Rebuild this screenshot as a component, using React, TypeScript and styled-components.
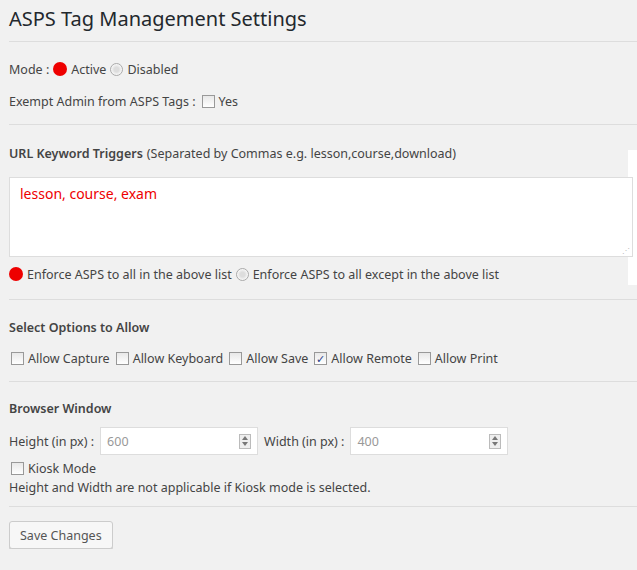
import React from 'react';
import styled, { createGlobalStyle } from 'styled-components';

const Global = createGlobalStyle`
  html, body { margin: 0; background: #f1f1f1; }
  body { font-family: "Noto Sans", "Open Sans", sans-serif; font-size: 12.5px; color: #444; }
`;

const Page = styled.div`
  padding: 0 0 0 9px;
  position: relative;
  width: 628px;
`;

const Title = styled.h1`
  margin: 0;
  padding: 5px 0 0;
  height: 36px;
  font-size: 20px;
  font-weight: 400;
  color: #23282d;
  border-bottom: 1px solid #ddd;
  margin-right: -9px;
`;

const Section = styled.div<{ $pad?: string }>`
  border-bottom: 1px solid #ddd;
  padding: ${p => p.$pad || '12px 0'};
`;

const Row = styled.div<{ $h?: number }>`
  display: flex;
  align-items: center;
  gap: 4px;
  height: ${p => p.$h || 26}px;
`;

const Heading = styled.div`
  font-weight: 600;
  height: 28px;
  display: flex;
  align-items: center;
  span { font-weight: 400; margin-left: 4px; }
`;

const RedDot = styled.span`
  width: 14px; height: 14px; border-radius: 50%;
  background: #e00; display: inline-block;
`;

const Radio = styled.span`
  width: 11px; height: 11px; border-radius: 50%;
  border: 1px solid #aaa; background: radial-gradient(circle, #ddd 30%, #f8f8f8 70%);
  display: inline-block;
`;

const Box = styled.span`
  width: 11px; height: 11px; border: 1px solid #999;
  background: linear-gradient(#e8e8e8, #fff);
  display: inline-flex; align-items: center; justify-content: center;
  color: #2a3e8c; font-size: 11px; line-height: 1;
  margin-left: 2px;
`;

const TextArea = styled.div`
  background: #fff;
  border: 1px solid #ddd;
  height: 66px;
  padding: 6px 10px;
  color: #e00;
  font-size: 14px;
  margin-right: 4px;
  position: relative;
`;

const Grip = styled.span`
  position: absolute; right: 2px; bottom: 1px; color: #bbb; font-size: 8px;
`;

const RightStrip = styled.div`
  position: absolute; right: 0; top: 150px; width: 9px; height: 135px; background: #fff;
`;

const NumInput = styled.div`
  width: 158px; height: 28px; background: #fff; border: 1px solid #ddd;
  display: flex; align-items: center; justify-content: space-between;
  padding: 0 6px; box-sizing: border-box; color: #999; margin: 0 2px;
`;

const Spinner = styled.span`
  width: 10px; height: 13px; border: 1px solid #bbb; background: #eee;
  display: flex; flex-direction: column; align-items: center; justify-content: space-around;
`;

const Button = styled.button`
  font: inherit; color: #555; background: #f7f7f7;
  border: 1px solid #ccc; border-radius: 3px; box-shadow: 0 1px 0 #ccc;
  height: 28px; padding: 0 10px; margin-top: 14px;
`;

const Arrows = () => (
  <Spinner>
    <svg width="6" height="4" viewBox="0 0 6 4"><path d="M0 4L3 0L6 4Z" fill="#777" /></svg>
    <svg width="6" height="4" viewBox="0 0 6 4"><path d="M0 0L3 4L6 0Z" fill="#777" /></svg>
  </Spinner>
);

export default function App() {
  return (
    <>
      <Global />
      <Page>
        <RightStrip />
        <Title>ASPS Tag Management Settings</Title>
        <Section $pad="12px 0 6px">
          <Row $h={30}>Mode : <RedDot /> Active <Radio /> Disabled</Row>
          <Row $h={34}>Exempt Admin from ASPS Tags : <Box /> Yes</Row>
        </Section>
        <Section $pad="14px 0 8px">
          <Heading>URL Keyword Triggers<span>(Separated by Commas e.g. lesson,course,download)</span></Heading>
          <div style={{ height: 10 }} />
          <TextArea>lesson, course, exam<Grip>⋰</Grip></TextArea>
          <Row $h={34}><RedDot /> Enforce ASPS to all in the above list <Radio /> Enforce ASPS to all except in the above list</Row>
        </Section>
        <Section $pad="13px 0 6px">
          <Heading>Select Options to Allow</Heading>
          <Row $h={34}>
            <Box /> Allow Capture <Box /> Allow Keyboard <Box /> Allow Save <Box>✓</Box> Allow Remote <Box /> Allow Print
          </Row>
        </Section>
        <Section $pad="12px 0 10px">
          <Heading>Browser Window</Heading>
          <Row $h={34} style={{ marginTop: 2 }}>
            Height (in px) : <NumInput>600<Arrows /></NumInput>
            Width (in px) : <NumInput>400<Arrows /></NumInput>
          </Row>
          <Row $h={20}><Box /> Kiosk Mode</Row>
          <Row $h={18}>Height and Width are not applicable if Kiosk mode is selected.</Row>
        </Section>
        <Button>Save Changes</Button>
      </Page>
    </>
  );
}
